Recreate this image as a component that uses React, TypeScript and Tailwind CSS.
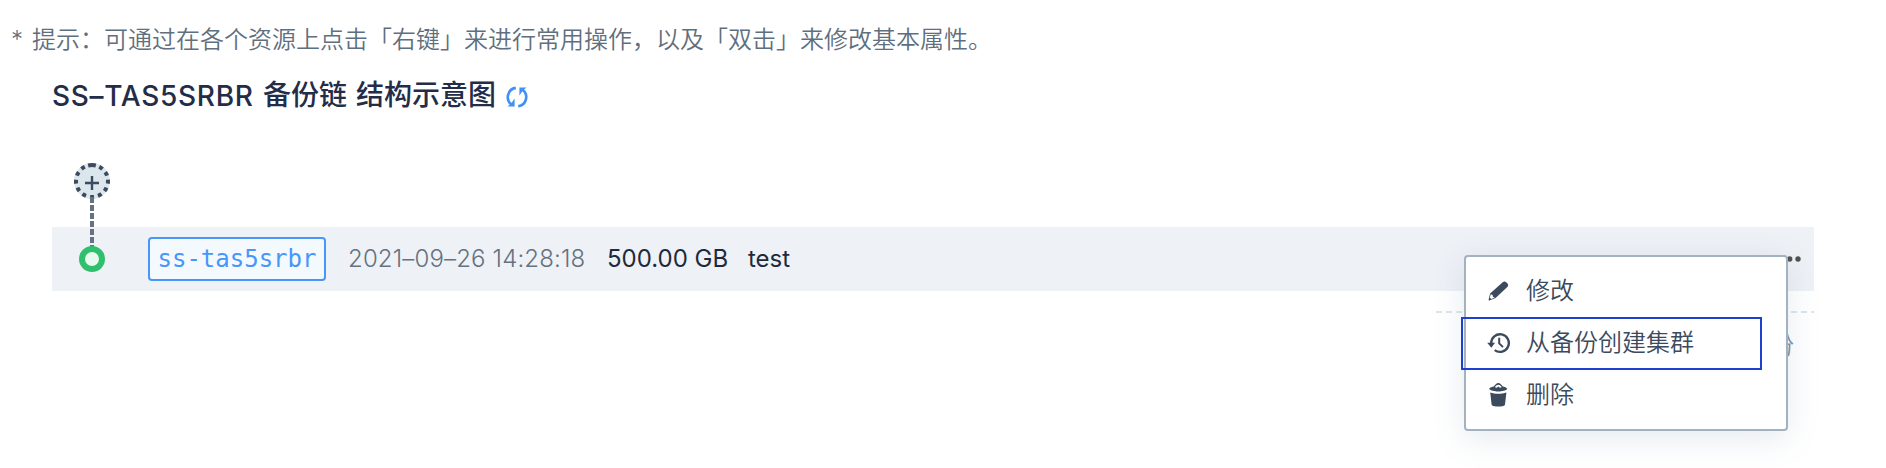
import type { ReactNode } from "react";

const RING_DASHES = "28 13 14 15.2 14 15.2 14 15.2 14 15.2 14 15.2 14 15.2 14 15.2 14 15.2 14 15.2 14 15.2 14 13";

function RefreshIcon() {
  return (
    <svg className="ml-[9px] mt-px size-6 shrink-0" viewBox="0 0 24 24" fill="none" stroke="#4090f7" strokeWidth="2.6">
      <path d="M10.8 2.900C2.200 4.200.3 14.600 6.300 19.500" />
      <path d="M13.200 21.300c8.600-1.300 10.500-11.700 4.500-16.600" />
      <path d="M9.600 13.600v7.900H2.400l3.400-2.600zM14.400 10.400V2.500h7.200l-3.400 2.600z" fill="#4090f7" stroke="none" />
    </svg>
  );
}

function ChainNodes() {
  return (
    <svg className="absolute left-[20px] top-[-66px] h-[114px] w-10" viewBox="0 0 40 114" fill="none">
      <circle cx="20" cy="20" r="18" fill="#dce6ed" />
      <circle cx="20" cy="20" r="16" stroke="#3b4a5c" strokeWidth="4" pathLength="360" strokeDasharray={RING_DASHES} transform="rotate(-104 20 20)" />
      <path d="M20 15v14M13 22h14" stroke="#3b4a5c" strokeWidth="2.400" />
      <path d="M20 36v50" stroke="#667281" strokeWidth="4" strokeDasharray="6 2" />
      <circle cx="20" cy="98" r="10" fill="#e8f9ef" stroke="#30bf6c" strokeWidth="6" />
    </svg>
  );
}

function PencilIcon() {
  return (
    <svg className="size-6" viewBox="0 0 24 24">
      <path d="M15.700 3.200c1.200-1.100 2.700-1 3.800.2l1 1.100c1 1.100.9 2.600-.2 3.600L8.600 19.100l-6.300 2.400c-.5.100-.8-.2-.7-.7l1.500-6.300z" fill="#3b4a5c" />
      <path d="m3.700 15.300 1.900.6.400 2 1.900.5-3.700 1.500-1.300-1.100z" fill="#fff" />
    </svg>
  );
}

function RestoreIcon() {
  return (
    <svg className="size-6" viewBox="0 0 24 24" fill="none" stroke="#3b4a5c" strokeWidth="2.400">
      <path d="M4.200 12.300a8.800 8.800 0 1 1 3.500 6.800" />
      <path d="M12.200 6.800v5.600l3.800 3.700" strokeWidth="2" />
      <path d="M.2 11.700h7.900l-3.800 5z" fill="#3b4a5c" stroke="none" />
    </svg>
  );
}

function TrashIcon() {
  return (
    <svg className="size-6" viewBox="0 0 24 24" fill="#3b4a5c">
      <path d="M2.100 5.700c1.100-1.500 3-1.900 4.700-2.300C8 1.900 9.500 0 11.300 0s3.300 1.900 4.500 3.400c1.700.4 3.600.9 4.600 2.300-1.400 2-5.300 2.700-9.100 2.700S3.500 7.700 2.100 5.700z" />
      <path d="M7.900 4.300c.7-1.200 2-2.500 3.400-2.500s2.700 1.300 3.400 2.500l-1.800.5-1.600-1.400-1.600 1.400z" fill="#fff" />
      <path d="M3.200 9.400c4.600 1.700 11.600 1.700 16.200 0l-1.400 12c-.2 2.900-13.200 2.900-13.400 0z" />
    </svg>
  );
}

function MenuItem({ icon, label }: { icon: ReactNode; label: string }) {
  return (
    <li className="flex h-[52px] items-center gap-[15px] pl-[21px]">
      {icon}
      <span className="-mt-1">{label}</span>
    </li>
  );
}

export default function App() {
  return (
    <main className="relative h-[468px] w-full overflow-hidden bg-white font-['Inter','Noto_Sans_CJK_SC',sans-serif] text-2xl">
      <p className="flex h-[76px] items-center pl-[11px] font-['Noto_Sans_CJK_SC',sans-serif] font-[350] text-[#5f6f7e]">
        <span className="w-[21px] pt-1 font-['Inter',sans-serif] font-light">*</span>
        <span className="whitespace-nowrap">提示：可通过在各个资源上点击「右键」来进行常用操作，以及「双击」来修改基本属性。</span>
      </p>
      <section className="pl-[52px] pr-[72px]">
        <h1 className="mt-0.5 flex h-[36px] items-center whitespace-nowrap text-[28px] font-medium text-[#242d48]">
          <span className="w-[211px] pt-0.5 tracking-[0.7px]">SS–TAS5SRBR</span>
          <span className="w-[93px]">备份链</span>
          <span>结构示意图</span>
          <RefreshIcon />
        </h1>
        <div className="relative mt-[113px] flex h-16 items-center bg-[#eef1f6] pl-24 pr-[12px] font-light">
          <ChainNodes />
          <span className="flex h-11 w-[178px] items-center justify-center rounded border-2 border-[#4796f8] bg-[#f4f9fe] font-['DejaVu_Sans_Mono',monospace] font-normal text-[#4796f8]">
            ss-tas5srbr
          </span>
          <time className="ml-[22px] w-[259px] whitespace-nowrap tracking-[0.15px] text-[#647281]">2021–09–26 14:28:18</time>
          <span className="w-[141px] whitespace-nowrap font-normal text-[#1d2b3c]">500.00 GB</span>
          <span className="font-normal text-[#1d2b3c]">test</span>
          <svg className="ml-auto h-2 w-6" viewBox="0 0 24 8" fill="#505050">
            <circle cx="3.400" cy="4" r="2.700" />
            <circle cx="11.700" cy="4" r="2.700" />
            <circle cx="20" cy="4" r="2.700" />
          </svg>
        </div>
        <div className="ml-auto mt-5 w-[378px]">
          <svg className="block h-0.5 w-full" viewBox="0 0 378 2">
            <path d="M0 1h378" stroke="#dbe5ec" strokeWidth="2" strokeDasharray="6 4.140" />
          </svg>
          <p className="mt-[17px] pr-5 text-right font-[350] text-[#8290a0]">份</p>
        </div>
      </section>
      <ul className="absolute left-[1464px] top-[255px] h-[176px] w-[324px] rounded border-2 border-[#a4b2c0] bg-white pt-2 font-['Noto_Sans_CJK_SC',sans-serif] font-[350] text-[#3b4a5c] shadow-[0_8px_32px_rgba(80,120,150,0.15)]">
        <MenuItem icon={<PencilIcon />} label="修改" />
        <MenuItem icon={<RestoreIcon />} label="从备份创建集群" />
        <MenuItem icon={<TrashIcon />} label="删除" />
      </ul>
      <div className="absolute left-[1461px] top-[317px] h-[53px] w-[301px] border-2 border-[#1d40cf]" />
    </main>
  );
}
